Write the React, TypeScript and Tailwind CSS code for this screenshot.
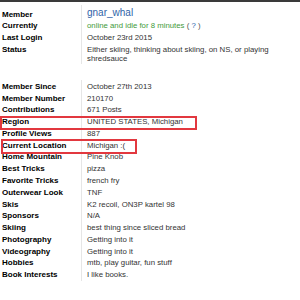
const group1 = [
  { label: "Currently", value: "online" },
  { label: "Last Login", value: "October 23rd 2015" },
  { label: "Status", value: "status" },
];

const group2: { label: string; value: string }[] = [
  { label: "Member Since", value: "October 27th 2013" },
  { label: "Member Number", value: "210170" },
  { label: "Contributions", value: "671 Posts" },
  { label: "Region", value: "UNITED STATES, Michigan" },
  { label: "Profile Views", value: "887" },
  { label: "Current Location", value: "Michigan :(" },
  { label: "Home Mountain", value: "Pine Knob" },
  { label: "Best Tricks", value: "pizza" },
  { label: "Favorite Tricks", value: "french fry" },
  { label: "Outerwear Look", value: "TNF" },
  { label: "Skis", value: "K2 recoil, ON3P kartel 98" },
  { label: "Sponsors", value: "N/A" },
  { label: "Skiing", value: "best thing since sliced bread" },
  { label: "Photography", value: "Getting into it" },
  { label: "Videography", value: "Getting into it" },
  { label: "Hobbies", value: "mtb, play guitar, fun stuff" },
  { label: "Book Interests", value: "I like books." },
];

function Value({ v }: { v: string }) {
  if (v === "online") {
    return (
      <span>
        <span className="text-[#3f9a3a]">online and idle for 8 minutes</span>{" "}
        <span className="text-[#555]">(</span> <span className="text-[#2a62a8]">?</span>{" "}
        <span className="text-[#555]">)</span>
      </span>
    );
  }
  if (v === "status") {
    return (
      <span>
        Either skiing, thinking about skiing, on NS, or playing
        <br />
        shredsauce
      </span>
    );
  }
  return <span>{v}</span>;
}

export default function App() {
  return (
    <div
      className="w-[300px] h-[300px] bg-white overflow-hidden border-t-2 border-[#3a3a3a] relative"
      style={{ fontFamily: '"Liberation Sans", Arial, sans-serif' }}
    >
      <div className="grid grid-cols-[81px_1fr] pt-[3px]">
        <div className="pl-[2px] font-bold text-[8px] leading-[9px] text-black pt-[5px] pb-[1px]">Member</div>
        <div className="pl-[5px] border-l border-[#e6e6e6] text-[10px] leading-[14px] text-[#2f64a8] pt-[1px]">gnar_whal</div>
        {group1.map((r) => (
          <div key={r.label} className="contents">
            <div className="pl-[2px] font-bold text-[8px] leading-[9px] text-black py-[1.4px]">{r.label}</div>
            <div className="pl-[5px] border-l border-[#e6e6e6] text-[7.8px] leading-[9px] text-[#333] py-[1.4px]">
              <Value v={r.value} />
            </div>
          </div>
        ))}
      </div>
      <div className="grid grid-cols-[81px_1fr] mt-[16px]">
        {group2.map((r) => (
          <div key={r.label} className="contents">
            <div className="pl-[2px] font-bold text-[8px] leading-[9px] text-black py-[1.4px] whitespace-nowrap">{r.label}</div>
            <div className="pl-[5px] border-l border-[#e6e6e6] text-[7.8px] leading-[9px] text-[#333] py-[1.4px] whitespace-nowrap">
              <Value v={r.value} />
            </div>
          </div>
        ))}
      </div>
      <div className="absolute left-0 top-[114px] w-[197px] h-[14px] border-2 border-[#e2383f]" />
      <div className="absolute left-[1px] top-[137px] w-[136px] h-[15px] border-2 border-[#e2383f]" />
    </div>
  );
}
